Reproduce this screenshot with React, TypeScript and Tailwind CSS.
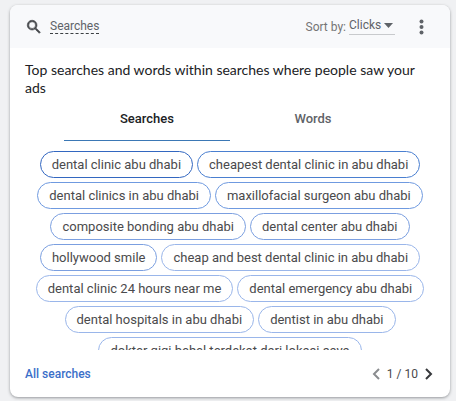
import { useState } from "react";

const searches = [
  { text: "dental clinic abu dhabi", border: "border-[#3367c0]" },
  { text: "cheapest dental clinic in abu dhabi", border: "border-[#4a7fd0]" },
  { text: "dental clinics in abu dhabi", border: "border-[#6f9ae0]" },
  { text: "maxillofacial surgeon abu dhabi", border: "border-[#6f9ae0]" },
  { text: "composite bonding abu dhabi", border: "border-[#7b9fe0]" },
  { text: "dental center abu dhabi", border: "border-[#7b9fe0]" },
  { text: "hollywood smile", border: "border-[#7b9fe0]" },
  { text: "cheap and best dental clinic in abu dhabi", border: "border-[#9ab6ea]" },
  { text: "dental clinic 24 hours near me", border: "border-[#9ab6ea]" },
  { text: "dental emergency abu dhabi", border: "border-[#9ab6ea]" },
  { text: "dental hospitals in abu dhabi", border: "border-[#9ab6ea]" },
  { text: "dentist in abu dhabi", border: "border-[#9ab6ea]" },
  { text: "dokter gigi behel terdekat dari lokasi saya", border: "border-[#9ab6ea]" },
];

function Header() {
  return (
    <header className="flex h-[43px] items-center bg-[#f8f9fb] pr-6 pl-[15px] text-xs">
      <svg className="size-[18px]" viewBox="0 0 24 24" fill="#44474a" stroke="#44474a" strokeWidth="0.8" aria-hidden="true">
        <path d="M15.5 14h-.79l-.28-.27A6.47 6.47 0 0 0 16 9.5 6.5 6.5 0 1 0 9.500 16c1.610 0 3.090-.59 4.230-1.570l.27.28v.79l5 4.990L20.490 19l-4.990-5zm-6 0a4.500 4.500 0 1 1 0-9 4.500 4.500 0 0 1 0 9z" />
      </svg>
      <h2 className="ml-[7px] border-b border-dashed border-[#3c4043] leading-[14px] text-[#5f6368]">
        Searches
      </h2>
      <label htmlFor="sort" className="ml-auto pr-[3px] text-[#757575]">
        Sort by:
      </label>
      <div className="relative w-[46px] border-b border-[#c8cacd] pb-[2px]">
        <select
          id="sort"
          className="block w-full appearance-none bg-transparent leading-[14px] text-[#5f6368] outline-none"
        >
          <option>Clicks</option>
        </select>
        <svg
          className="pointer-events-none absolute top-[5px] right-[2px] h-[5px] w-[9px]"
          viewBox="0 0 9 5"
          fill="#5f6368"
          aria-hidden="true"
        >
          <path d="M0 0h9L4.500 5z" />
        </svg>
      </div>
      <button type="button" aria-label="More options" className="ml-[22px] px-[2px]">
        <svg className="h-4 w-[5px]" viewBox="0 0 5 16" fill="#5f6368" aria-hidden="true">
          <circle cx="2.500" cy="2.500" r="2" />
          <circle cx="2.500" cy="8" r="2" />
          <circle cx="2.500" cy="13.500" r="2" />
        </svg>
      </button>
    </header>
  );
}

function Tabs() {
  const [active, setActive] = useState("Searches");
  return (
    <div role="tablist" className="flex px-[54px]">
      {["Searches", "Words"].map((name) => (
        <button
          key={name}
          type="button"
          role="tab"
          aria-selected={active === name}
          onClick={() => setActive(name)}
          className={`h-11 flex-1 border-b text-[13px] font-medium ${
            active === name
              ? "border-[#3b78b5] text-[#202124]"
              : "border-transparent text-[#5f6368]"
          }`}
        >
          {name}
        </button>
      ))}
    </div>
  );
}

export default function App() {
  return (
    <main className="min-h-screen bg-[#f0f1f3] pt-[5px] pr-[6px] pb-1 pl-[10px] font-['Roboto','Liberation_Sans',sans-serif]">
      <section className="overflow-hidden rounded-lg bg-white shadow-[0_1px_3px_rgba(60,64,67,0.5)]">
        <Header />
        <p className="px-[15px] pt-[13px] font-['Lato','Roboto',sans-serif] text-sm leading-[18px] text-[#202124]">
          Top searches and words within searches where people saw your ads
        </p>
        <Tabs />
        <ul className="mt-[10px] flex h-[199px] flex-wrap content-start justify-center gap-1 overflow-hidden px-6">
          {searches.map(({ text, border }) => (
            <li
              key={text}
              className={`h-[27px] rounded-full border px-[11px] text-[13px] leading-[25px] whitespace-nowrap text-[#4a4a4c] ${border}`}
            >
              {text}
            </li>
          ))}
        </ul>
        <footer className="flex h-[47px] items-center justify-between pr-[17px] pl-[15px]">
          <a href="#all" className="text-xs font-medium text-[#3b6fc9]">
            All searches
          </a>
          <nav aria-label="Pages" className="flex items-center gap-[7px] text-xs text-[#4a4a4c]">
            <button type="button" aria-label="Previous page">
              <svg className="h-3 w-2" viewBox="0 0 8 12" fill="none" stroke="#8a8c8f" strokeWidth="2" aria-hidden="true">
                <path d="M7 1L2 6l5 5" />
              </svg>
            </button>
            <span>1 / 10</span>
            <button type="button" aria-label="Next page">
              <svg className="h-3 w-2" viewBox="0 0 8 12" fill="none" stroke="#37393c" strokeWidth="2" aria-hidden="true">
                <path d="M1 1l5 5-5 5" />
              </svg>
            </button>
          </nav>
        </footer>
      </section>
    </main>
  );
}
